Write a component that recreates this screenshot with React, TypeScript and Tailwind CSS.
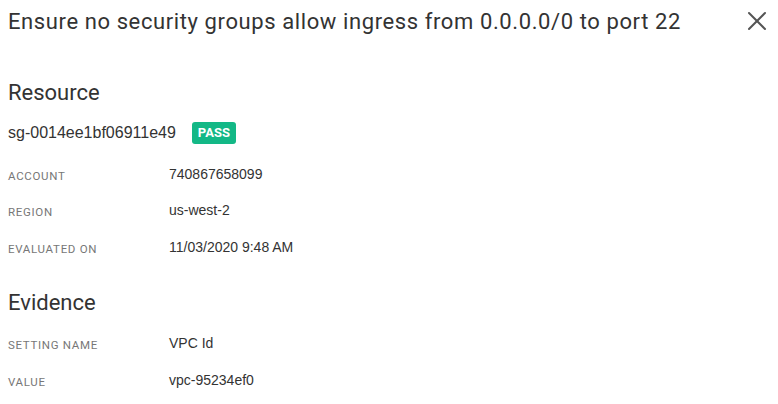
import { X } from 'lucide-react';

const resourceRows = [
    { label: 'ACCOUNT', value: '740867658099' },
    { label: 'REGION', value: 'us-west-2' },
    { label: 'EVALUATED ON', value: '11/03/2020 9:48 AM' },
];

const evidenceRows = [
    { label: 'SETTING NAME', value: 'VPC Id' },
    { label: 'VALUE', value: 'vpc-95234ef0' },
];

function Row({ label, value }: { label: string; value: string }) {
    return (
        <div className="flex items-center h-[36.5px]">
            <div className="w-[161px] pt-[4px] text-[11.5px] tracking-[0.06em] text-[#777] font-['Roboto',sans-serif]">
                {label}
            </div>
            <div className="text-[14px] text-[#333] font-['Liberation_Sans',Arial,sans-serif]">{value}</div>
        </div>
    );
}

export default function App() {
    return (
        <div className="w-[778px] h-[404px] bg-white text-[#333] px-2 overflow-hidden">
            {/* Header */}
            <div className="flex items-center justify-between h-[42px]">
                <h1 className="text-[22px] tracking-[0.6px] font-['Roboto',sans-serif] text-[#333] font-normal">
                    Ensure no security groups allow ingress from 0.0.0.0/0 to port 22
                </h1>
                <button className="mr-[-3px] text-[#555]">
                    <X size={32} strokeWidth={1.5} />
                </button>
            </div>

            {/* Resource */}
            <h2 className="mt-[34px] text-[22px] leading-[34px] font-['Roboto',sans-serif] text-[#333]">Resource</h2>
            <div className="flex items-center gap-4 mt-[11px] h-[24px]">
                <span className="text-[16px] text-[#333] font-['Liberation_Sans',Arial,sans-serif]">sg-0014ee1bf06911e49</span>
                <span className="bg-[#13b886] text-white text-[13px] font-bold font-['Roboto',sans-serif] px-[6px] h-[22px] leading-[22px] rounded-[3px]">
                    PASS
                </span>
            </div>
            <div className="mt-[11px]">
                {resourceRows.map((r) => (
                    <Row key={r.label} {...r} />
                ))}
            </div>

            {/* Evidence */}
            <h2 className="mt-[20px] text-[22px] leading-[34px] font-['Roboto',sans-serif] text-[#333]">Evidence</h2>
            <div className="mt-[6px]">
                {evidenceRows.map((r) => (
                    <Row key={r.label} {...r} />
                ))}
            </div>
        </div>
    );
}
